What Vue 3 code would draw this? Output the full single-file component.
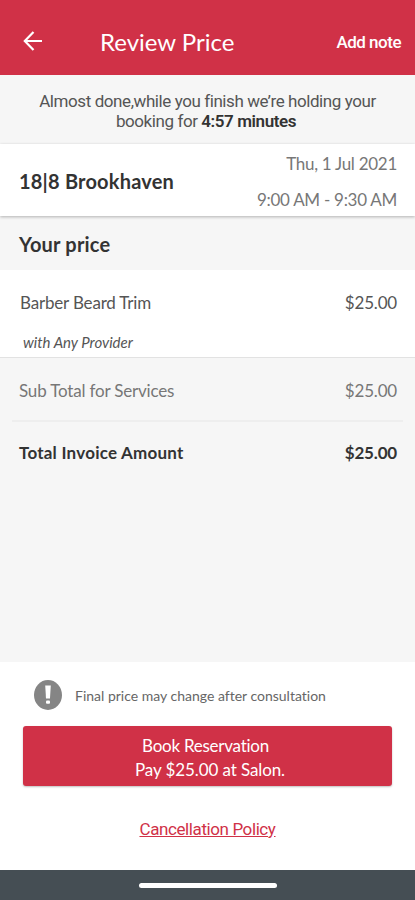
<script setup>
const totals = [
  { label: 'Sub Total for Services', amount: '$25.00', strong: false },
  { label: 'Total Invoice Amount', amount: '$25.00', strong: true },
]
</script>

<template>
  <div class="screen">
    <header class="bar">
      <svg class="back" viewBox="0 0 20 20" aria-hidden="true">
        <path d="M19 10H2M10.500 1L1.800 10l8.700 9" />
      </svg>
      <h1 class="title">Review Price</h1>
      <span class="note">Add note</span>
    </header>

    <p class="hold">
      <span>Almost done,while you finish we’re holding your</span><br />
      <span class="hold-second">booking for <b>4:57 minutes</b></span>
    </p>

    <section class="salon">
      <h2 class="salon-name">18|8 Brookhaven</h2>
      <div class="when">
        <span>Thu, 1 Jul 2021</span>
        <span>9:00 AM - 9:30 AM</span>
      </div>
    </section>

    <h2 class="heading">Your price</h2>

    <section class="service">
      <div class="row">
        <span>Barber Beard Trim</span>
        <span>$25.00</span>
      </div>
      <em class="provider">with Any Provider</em>
    </section>

    <section class="totals">
      <div v-for="t in totals" :key="t.label" class="row total" :class="{ strong: t.strong }">
        <span class="label">{{ t.label }}</span>
        <span class="amount">{{ t.amount }}</span>
      </div>
    </section>

    <footer class="footer">
      <div class="notice">
        <svg class="alert" viewBox="0 0 28 30" aria-hidden="true">
          <ellipse cx="14" cy="15" rx="14" ry="15" fill="#858585" />
          <path d="M11.200 5.500h5.600l-.8 13h-4z" fill="#fff" />
          <rect x="12" y="20.500" width="4" height="3.200" rx="1" fill="#fff" />
        </svg>
        <span class="notice-text">Final price may change after consultation</span>
      </div>
      <button class="book">
        <span class="book-first">Book Reservation</span>
        <span class="book-second">Pay $25.00 at Salon.</span>
      </button>
      <a class="policy">Cancellation Policy</a>
    </footer>

    <div class="nav"><span class="pill"></span></div>
  </div>
</template>

<style>
body {
  margin: 0;
}
</style>

<style scoped>
.screen {
  width: 415px;
  height: 900px;
  display: flex;
  flex-direction: column;
  overflow: hidden;
  background: #f6f6f6;
  color: #555;
  font-family: Lato, 'Open Sans', sans-serif;
  font-size: 17px;
  font-variant-ligatures: none;
  white-space: nowrap;
}
h1,
h2,
p {
  margin: 0;
}
.bar {
  flex: none;
  height: 75px;
  box-sizing: border-box;
  padding: 8px 14px 0 23px;
  display: flex;
  align-items: center;
  background: #d03147;
  color: #fff;
}
.back {
  width: 20px;
  height: 20px;
  margin-top: -1px;
  fill: none;
  stroke: #fff;
  stroke-width: 2.2;
}
.title {
  margin-left: 57px;
  font-size: 24px;
  line-height: 30px;
  font-weight: 400;
}
.note {
  margin-left: auto;
  font: 500 17px/20px Roboto, sans-serif;
  letter-spacing: -0.5px;
}
.hold {
  flex: none;
  height: 69px;
  box-sizing: border-box;
  padding-top: 16px;
  text-align: center;
  font: 400 17px/20px Roboto, sans-serif;
  letter-spacing: -0.42px;
}
.hold-second {
  padding-right: 3px;
}
.hold b {
  font-weight: 600;
  color: #333;
}
.salon {
  flex: none;
  height: 72px;
  box-sizing: border-box;
  padding: 3px 18px 0 19px;
  display: flex;
  align-items: center;
  justify-content: space-between;
  background: #fff;
  box-shadow: 0 1px 3px rgba(0, 0, 0, 0.28);
  z-index: 1;
}
.salon-name,
.heading {
  font-size: 20px;
  line-height: 26px;
  font-weight: 700;
  letter-spacing: 0.2px;
  color: #333;
}
.salon-name {
  padding-bottom: 2px;
}
.when {
  display: flex;
  flex-direction: column;
  align-items: flex-end;
  line-height: 36px;
  letter-spacing: -0.28px;
  color: #777;
}
.heading {
  flex: none;
  height: 54px;
  box-sizing: border-box;
  padding: 15px 19px 0;
}
.service {
  flex: none;
  height: 88px;
  box-sizing: border-box;
  padding: 21px 18px 0 20px;
  background: #fff;
  border-bottom: 1px solid #e2e2e2;
}
.row {
  display: flex;
  justify-content: space-between;
  line-height: 24px;
  letter-spacing: -0.18px;
}
.provider {
  display: block;
  margin: 17px 0 0 3px;
  font-size: 15px;
  line-height: 20px;
}
.totals {
  flex: 1;
  padding: 0 12px;
}
.total {
  height: 62px;
  box-sizing: border-box;
  padding: 21px 6px 0 7px;
  color: #777;
}
.strong {
  padding-top: 19px;
  border-top: 2px solid #eee;
  font-weight: 700;
  color: #333;
}
.strong .label {
  letter-spacing: 0.23px;
}
.footer {
  flex: none;
  height: 208px;
  box-sizing: border-box;
  padding: 18px 23px 0;
  display: flex;
  flex-direction: column;
  background: #fff;
}
.notice {
  display: flex;
  align-items: center;
  height: 30px;
  padding-left: 11px;
  gap: 13px;
}
.alert {
  width: 28px;
  height: 30px;
}
.notice-text {
  font-size: 14px;
  color: #666;
}
.book {
  height: 60px;
  margin-top: 16px;
  padding: 3px 0 0;
  border: 0;
  border-radius: 3px;
  display: flex;
  flex-direction: column;
  align-items: center;
  justify-content: center;
  background: #d03147;
  box-shadow: 0 1px 2px rgba(0, 0, 0, 0.25);
  color: #fff;
  font: 400 17px/24px Lato, sans-serif;
  font-variant-ligatures: none;
}
.book-first {
  padding-right: 4px;
  letter-spacing: -0.25px;
}
.book-second {
  padding-left: 5px;
  letter-spacing: -0.1px;
}
.policy {
  align-self: center;
  margin-top: 32px;
  font: 400 17px/22px Roboto, sans-serif;
  letter-spacing: -0.4px;
  color: #d03147;
  text-decoration: underline;
}
.nav {
  flex: none;
  height: 30px;
  display: flex;
  justify-content: center;
  align-items: center;
  background: #454e54;
}
.pill {
  width: 138px;
  height: 5px;
  border-radius: 3px;
  background: #fff;
}
</style>
